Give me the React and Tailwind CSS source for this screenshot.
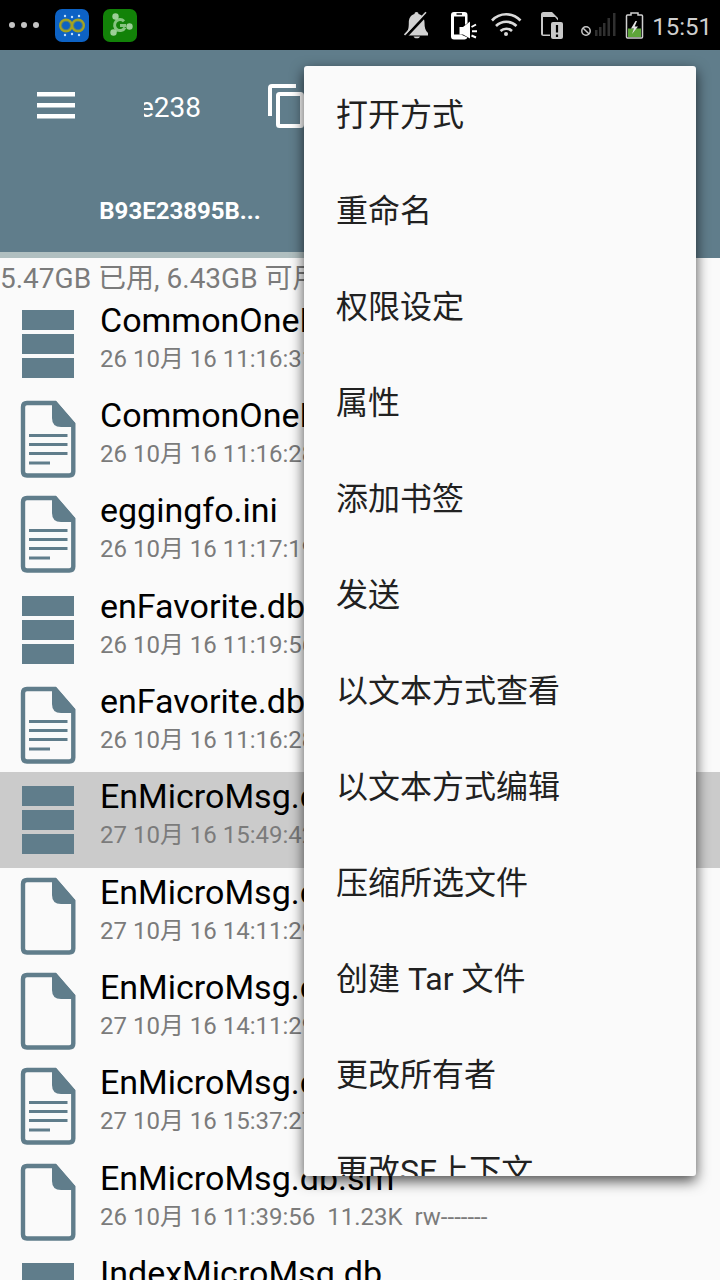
import React, { useState } from "react";
import clsx from "clsx";

const files = [
  { id: 1, name: "CommonOneMicroMsg.db", meta: "26 10月 16 11:16:31", type: "db" },
  { id: 2, name: "CommonOneMicroMsg.ini", meta: "26 10月 16 11:16:28", type: "text" },
  { id: 3, name: "eggingfo.ini", meta: "26 10月 16 11:17:19", type: "text" },
  { id: 4, name: "enFavorite.db", meta: "26 10月 16 11:19:56", type: "db" },
  { id: 5, name: "enFavorite.db.ini", meta: "26 10月 16 11:16:28", type: "text" },
  { id: 6, name: "EnMicroMsg.db", meta: "27 10月 16 15:49:42", type: "db" },
  { id: 7, name: "EnMicroMsg.db-shm", meta: "27 10月 16 14:11:29", type: "file" },
  { id: 8, name: "EnMicroMsg.db-wal", meta: "27 10月 16 14:11:29", type: "file" },
  { id: 9, name: "EnMicroMsg.db.ini", meta: "27 10月 16 15:37:27", type: "text" },
  { id: 10, name: "EnMicroMsg.db.sm", meta: "26 10月 16 11:39:56  11.23K  rw-------", type: "file" },
  { id: 11, name: "IndexMicroMsg.db", meta: "", type: "db" },
];

const menuItems = [
  "打开方式",
  "重命名",
  "权限设定",
  "属性",
  "添加书签",
  "发送",
  "以文本方式查看",
  "以文本方式编辑",
  "压缩所选文件",
  "创建 Tar 文件",
  "更改所有者",
  "更改SE上下文",
];

function StatusBar() {
  return (
    <div className="flex h-[50px] shrink-0 items-center justify-between bg-black pr-2">
      <div className="flex items-center">
        {/* more notifications */}
        <svg width="55" height="50" viewBox="0 0 55 50" fill="#c4c4c4">
          <circle cx="12" cy="25" r="3" />
          <circle cx="24" cy="25" r="3" />
          <circle cx="36" cy="25" r="3" />
        </svg>
        <svg width="48" height="50" viewBox="0 0 48 50" fill="none">
          <rect x="0" y="9" width="34" height="33" rx="7" fill="#0d62c4" />
          <g stroke="#a3a321" strokeWidth="2.4">
            <circle cx="11" cy="25.5" r="5.8" />
            <circle cx="23" cy="25.5" r="5.8" />
          </g>
          <g stroke="#6e8a5a" strokeWidth="0.8">
            <circle cx="11" cy="25.5" r="4.4" />
            <circle cx="23" cy="25.5" r="4.4" />
          </g>
          <g fill="#bfe0ff">
            <circle cx="10" cy="16" r="1.2" />
            <circle cx="17" cy="17" r="1.2" />
            <circle cx="24" cy="16" r="1.2" />
            <circle cx="10" cy="35" r="1.2" />
            <circle cx="17" cy="34" r="1.2" />
            <circle cx="24" cy="35" r="1.2" />
          </g>
        </svg>
        <svg width="34" height="50" viewBox="0 0 34 50" fill="none">
          <rect x="0" y="9" width="34" height="33" rx="7" fill="#128208" />
          <g stroke="#86c480" strokeWidth="3">
            <path d="M21 21.200a5.500 5.500 0 1 0 1 6.300" />
            <path d="M17 25.500h6M13 17.500l2 3M11.500 31.500l3-2" />
          </g>
          <g fill="#9ccf97">
            <circle cx="12.500" cy="16.500" r="3.200" />
            <circle cx="26.500" cy="26.500" r="3.200" />
            <circle cx="10.500" cy="32.500" r="3.200" />
          </g>
        </svg>
      </div>

      <div className="flex items-center gap-2">
        {/* bell off */}
        <svg width="38" height="50" viewBox="2 0 38 50" fill="#d2d2d2">
          <path d="M14.500 12c1.400 0 2 .9 2 2 4.200 1 6 4.500 6 8.500 0 5 .8 8 3.500 10.500v2.500H4v-2.500c2.200-2 2.800-5 2.800-10.500 0-4 1.800-7.500 5.700-8.500 0-1.100.6-2 2-2z" />
          <path d="M11.500 36.500h6.500c-.5 1.300-1.700 1.800-3.200 1.800s-2.700-.5-3.300-1.800z" />
          <path d="M25.500 13.500L3.500 37" stroke="#000" strokeWidth="2.800" />
          <path d="M24 12.300L2.500 35" stroke="#d2d2d2" strokeWidth="1.600" />
        </svg>
        {/* phone with speaker */}
        <svg width="33" height="50" viewBox="0 0 33 50" fill="#fff">
          <path
            fillRule="evenodd"
            d="M4 12h10.500q3 0 3 3v8l-2.500 2v-8.500H4V34.500h7l6.500 3q-1 2-3 2H4q-3 0-3-3V15q0-3 3-3zm2.500 1.300v1.400h5.500v-1.400z"
          />
          <path d="M9.500 27h3.500l7-5.500v17L13 34.500H9.500z" />
          <path d="M21.500 27l4.500-2.500M22 31.200h5M21.500 35.500l4.500 2" stroke="#fff" strokeWidth="2" />
        </svg>
        {/* wifi */}
        <svg width="41" height="50" viewBox="0 0 41 50" fill="none" stroke="#dadada" strokeWidth="2.600">
          <path d="M1 20.500a19.500 19.500 0 0 1 28.500 0" />
          <path d="M5 26a14.500 14.500 0 0 1 20.500 0" />
          <path d="M9.500 31a8.500 8.500 0 0 1 11.500 0" />
          <circle cx="15" cy="34" r="2" fill="#dadada" stroke="none" />
        </svg>
        {/* sim card alert */}
        <svg width="32" height="50" viewBox="0 0 32 50" fill="#c8c8c8">
          <path d="M1 14.500Q1 12 3.500 12H12l6 6v2.500L15 17H3v17.500h7V36H3.500Q1 36 1 33.500z" />
          <rect x="11" y="22" width="12" height="17" rx="2" />
          <path d="M17 25v7.500M17 34.500v2.500" stroke="#000" strokeWidth="2.200" />
        </svg>
        {/* no signal */}
        <svg width="37" height="50" viewBox="0 0 37 50" fill="none">
          <circle cx="6" cy="31" r="4.200" stroke="#c8c8c8" strokeWidth="1.500" />
          <path d="M3.200 28.200l5.600 5.600" stroke="#c8c8c8" strokeWidth="1.500" />
          <g fill="#303030">
            <rect x="15" y="30" width="2.500" height="6" />
            <rect x="19" y="27" width="2.500" height="9" />
            <rect x="23" y="23" width="2.500" height="13" />
            <rect x="27.500" y="18" width="2.500" height="18" />
            <rect x="33" y="13" width="2.500" height="23" />
          </g>
        </svg>
        {/* battery */}
        <svg width="19" height="50" viewBox="0 0 19 50" fill="none">
          <path d="M6 15v-2h7v2h3.500q1 0 1 1v21q0 1-1 1h-14q-1 0-1-1V16q0-1 1-1z" stroke="#d0d0d0" strokeWidth="1.500" />
          <rect x="3" y="28.500" width="13" height="8.500" fill="#5ea53a" />
          <path d="M10.500 21L6 28.500h3L7 34l6-7.500H9.700L12 21z" fill="#e4e4e4" />
        </svg>
        <time className="pt-1 text-2xl text-[#cfcfcf]">15:51</time>
      </div>
    </div>
  );
}

function FileIcon({ type }) {
  if (type === "db") {
    return (
      <svg className="shrink-0" width="100" height="95" viewBox="0 0 100 95" fill="#607d8b">
        <rect x="22" y="14" width="52" height="20" />
        <rect x="22" y="38" width="52" height="20" />
        <rect x="22" y="62" width="52" height="20" />
      </svg>
    );
  }
  return (
    <svg className="shrink-0" width="100" height="95" viewBox="0 0 100 95" fill="none" stroke="#607d8b">
      <path d="M27 12h28l18.300 21v47.500q0 4-4 4H27q-4 0-4-4V16q0-4 4-4z" strokeWidth="4.400" />
      <path d="M52 10h4l19 22v4H61q-9 0-9-9z" fill="#607d8b" stroke="none" />
      {type === "text" && (
        <path d="M29 44.500h38.500M29 53.500h38.500M29 62.500h38.500M29 72h21" strokeWidth="2.800" />
      )}
    </svg>
  );
}

function FileRow({ file, selected, onSelect }) {
  return (
    <li className="h-[95px] nth-[3n]:h-24">
      <button
        type="button"
        onClick={() => onSelect(file.id)}
        className={clsx("flex h-full w-full items-start text-left whitespace-pre", selected && "bg-[#cbcbcb]")}
      >
        <FileIcon type={file.type} />
        <span className="flex min-w-0 flex-col pt-[3px]">
          <span className="text-[34px] leading-[42px] text-black">{file.name}</span>
          <span className="text-2xl leading-9 text-[#7b7b7b]">{file.meta}</span>
        </span>
      </button>
    </li>
  );
}

function App() {
  const [selectedId, setSelectedId] = useState(6);

  return (
    <div className="relative flex h-screen flex-col overflow-hidden bg-[#fafafa] font-['Roboto','Noto_Sans_CJK_SC',sans-serif]">
      <StatusBar />

      <header className="shrink-0 bg-[#607d8b] text-white">
        <div className="flex h-28 items-center">
          <button type="button" aria-label="Menu" className="ml-9">
            <svg width="40" height="40" viewBox="0 0 40 40" fill="#fff">
              <rect x="1" y="6" width="38" height="4.500" />
              <rect x="1" y="17" width="38" height="4.500" />
              <rect x="1" y="28" width="38" height="4.500" />
            </svg>
          </button>
          <h1 className="ml-[68px] flex w-[57px] justify-end overflow-hidden pt-[3px] text-[28px]">e238</h1>
          <button type="button" aria-label="Copy" className="ml-[65px]">
            <svg width="44" height="44" viewBox="0 0 44 44" fill="none" stroke="#fff" strokeWidth="4">
              <path d="M4 32V4q0-2 2-2h24" />
              <rect x="12" y="10" width="24" height="32" rx="1.500" />
            </svg>
          </button>
        </div>
        <nav className="flex">
          <a
            href="#tab"
            className="flex h-24 w-1/2 items-center justify-center border-b-6 border-[#b0bfc0] pt-2 text-2xl font-bold"
          >
            B93E23895B...
          </a>
        </nav>
      </header>

      <p className="h-[38px] shrink-0 text-[28px] leading-[42px] whitespace-nowrap text-[#7b7b7b]">
        5.47GB 已用, 6.43GB 可用
      </p>

      <ul className="min-h-0 flex-1 overflow-hidden">
        {files.map((file) => (
          <FileRow key={file.id} file={file} selected={file.id === selectedId} onSelect={setSelectedId} />
        ))}
      </ul>

      {/* Popup menu for the selected file */}
      <ul className="absolute top-[66px] right-6 bottom-[104px] w-[392px] overflow-hidden rounded-[3px] bg-[#fafafa] shadow-[0_5px_14px_rgba(0,0,0,0.7)]">
        {menuItems.map((label) => (
          <li key={label}>
            <button type="button" className="h-24 w-full px-8 pt-[2px] text-left text-[32px] text-[#212121]">
              {label}
            </button>
          </li>
        ))}
      </ul>
    </div>
  );
}

export default App;
